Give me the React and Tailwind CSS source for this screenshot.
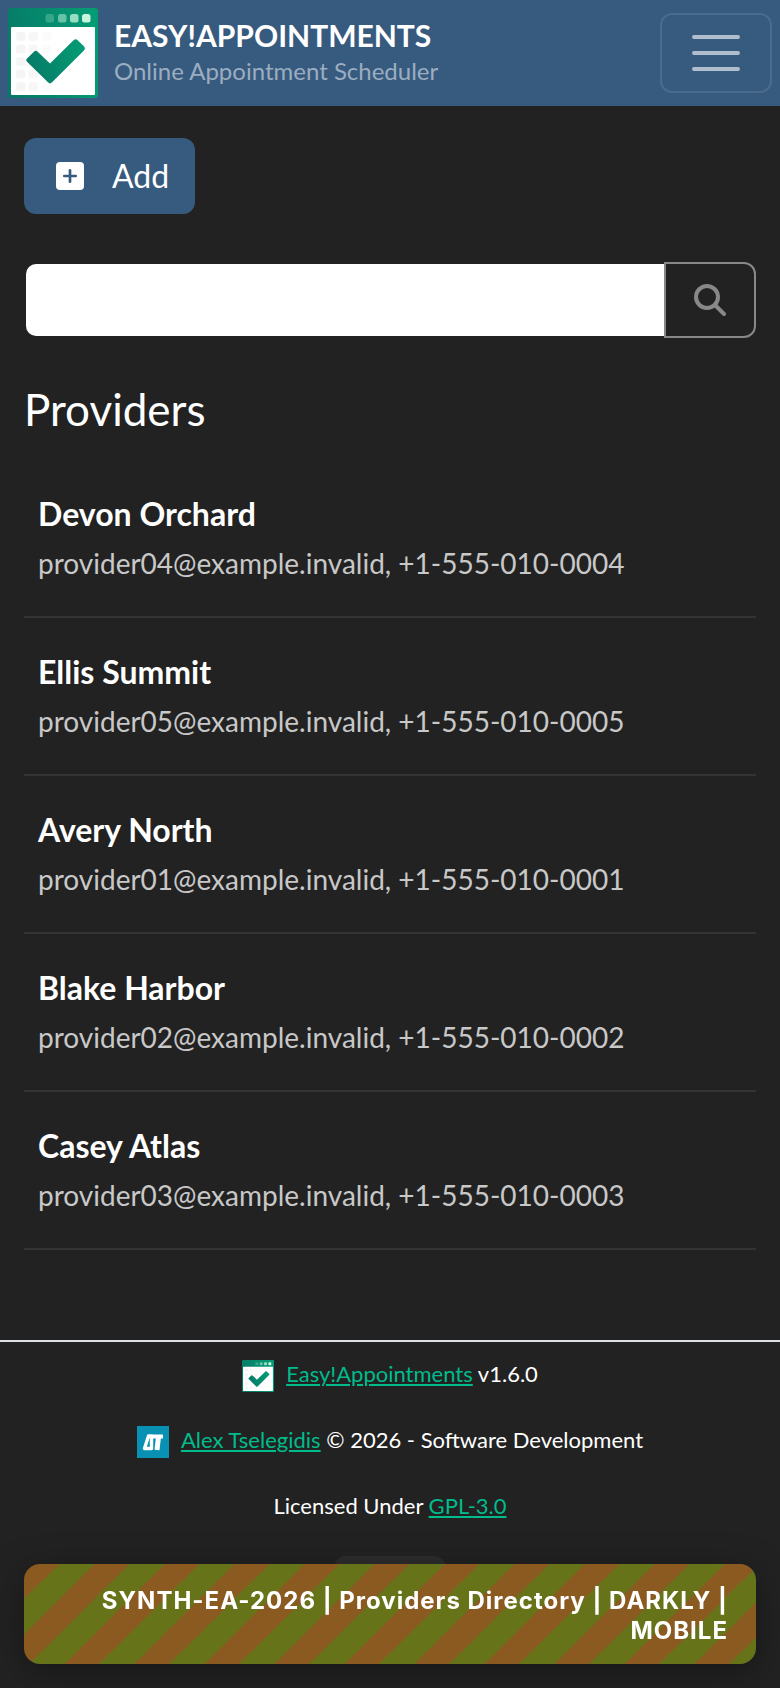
import { useState } from 'react'

const providers = [
  { name: 'Devon Orchard', email: 'provider04@example.invalid', phone: '+1-555-010-0004' },
  { name: 'Ellis Summit', email: 'provider05@example.invalid', phone: '+1-555-010-0005' },
  { name: 'Avery North', email: 'provider01@example.invalid', phone: '+1-555-010-0001' },
  { name: 'Blake Harbor', email: 'provider02@example.invalid', phone: '+1-555-010-0002' },
  { name: 'Casey Atlas', email: 'provider03@example.invalid', phone: '+1-555-010-0003' },
]

function LogoMark({ id, className }) {
  const columns = [
    { x: 8, opacity: 0.04 },
    { x: 20.5, opacity: 0.03 },
    { x: 34, opacity: 0.015 },
  ]

  return (
    <svg viewBox="0 0 90 90" className={className} aria-hidden="true">
      <defs>
        <linearGradient id={id} x1="0" y1="0.5" x2="1" y2="0.3">
          <stop offset="0" stopColor="#067a68" />
          <stop offset="1" stopColor="#059c74" />
        </linearGradient>
      </defs>
      <rect width="90" height="90" rx="3" fill={`url(#${id})`} />
      <rect x="3" y="19" width="84" height="68" rx="1" fill="#fff" />
      <g fill="#c8f5dd">
        <rect x="37.5" y="6" width="8.5" height="8.5" rx="2.5" opacity="0.25" />
        <rect x="50" y="6" width="8.5" height="8.5" rx="2.5" opacity="0.5" />
        <rect x="62" y="6" width="8.5" height="8.5" rx="2.5" opacity="0.75" />
        <rect x="74" y="6" width="8.5" height="8.5" rx="2.5" />
      </g>
      {columns.map((column) =>
        [24, 36.5, 49, 61.5, 74].map((y) => (
          <rect key={`${column.x}-${y}`} x={column.x} y={y} width="9.5" height="9" rx="2.5" opacity={column.opacity} />
        )),
      )}
      <path
        d="M18.8 50.8 L26.2 43.4 Q27.8 42 29.4 43.4 L42 55.6 L65.8 32 Q67.6 30.3 69.4 32 L76.2 38.6 Q77.8 40.4 76.2 42.2 L43.8 74.6 Q42 76.2 40.2 74.6 L18.8 53.6 Q17.4 52.2 18.8 50.8 Z"
        fill={`url(#${id})`}
      />
    </svg>
  )
}

function AuthorMark() {
  return (
    <svg viewBox="0 0 32 32" className="size-8 shrink-0" aria-hidden="true">
      <rect width="32" height="32" fill="#0891b2" />
      <g fill="none" stroke="#fff" strokeLinejoin="round">
        <path d="M7.5 22.5 L11.5 10 H14.5 V22.5 Z" strokeWidth="3.4" />
        <path d="M15 10.5 H26" strokeWidth="4" />
        <path d="M21.5 11 L20 24" strokeWidth="5" />
      </g>
    </svg>
  )
}

function Header() {
  return (
    <header className="flex items-center justify-between bg-[#375a7f] p-2">
      <a href="#calendar" className="flex items-center gap-4">
        <LogoMark id="header-logo" className="size-[90px] shrink-0" />
        <span className="flex flex-col">
          <span className="text-[30px] leading-9 font-bold text-white">EASY!APPOINTMENTS</span>
          <span className="text-2xl leading-9 text-[#9badc0]">Online Appointment Scheduler</span>
        </span>
      </a>
      <button
        type="button"
        aria-label="Toggle navigation"
        className="flex h-20 w-28 items-center justify-center rounded-xl border-2 border-white/10"
      >
        <svg viewBox="0 0 60 60" className="size-15" aria-hidden="true">
          <path d="M8 14 H52 M8 30 H52 M8 46 H52" stroke="#afbdcc" strokeWidth="4" strokeLinecap="round" />
        </svg>
      </button>
    </header>
  )
}

function ProviderRow({ provider }) {
  return (
    <li className="border-b-2 border-[#343434] px-3.5 pt-7 pb-[30px]">
      <a href="#provider" className="block">
        <strong className="block text-[32px] leading-[52px] font-bold text-white">{provider.name}</strong>
        <span className="block text-[28px] leading-[46px] text-[#c8c8c8]">
          {provider.email}, {provider.phone}
        </span>
      </a>
    </li>
  )
}

function Footer() {
  const row = 'flex h-[34px] gap-3'
  const link = 'text-[#00bc8c] underline'

  return (
    <footer className="flex flex-col items-center gap-8 border-t-2 border-[#dee2e6] pt-4 text-[22px] leading-8 text-white">
      <div className={row}>
        <span className="self-end">
          <LogoMark id="footer-logo" className="size-8 shrink-0" />
        </span>
        <span>
          <a href="#easyappointments" className={link}>Easy!Appointments</a> v1.6.0
        </span>
      </div>
      <div className={row}>
        <span className="self-end">
          <AuthorMark />
        </span>
        <span>
          <a href="#author" className={link}>Alex Tselegidis</a> © 2026 - Software Development
        </span>
      </div>
      <div className={row}>
        <span>
          Licensed Under <a href="#license" className={link}>GPL-3.0</a>
        </span>
      </div>
      <button type="button" aria-label="Select language" className="h-12 w-28 rounded-xl bg-[#2d2d2d]" />
    </footer>
  )
}

export default function App() {
  const [keyword, setKeyword] = useState('')

  return (
    <div className="min-h-screen bg-[#222222] font-['Lato',sans-serif]">
      <Header />

      <main className="px-6 pt-8 pb-[90px]">
        <button
          type="button"
          className="flex h-[76px] items-center gap-7 rounded-xl bg-[#375a7f] pr-[26px] pl-8 text-[32px] text-white"
        >
          <svg viewBox="0 0 28 28" className="size-7" aria-hidden="true">
            <rect width="28" height="28" rx="4" fill="#fff" />
            <path d="M14 8.3 V19.7 M8.3 14 H19.7" stroke="#375a7f" strokeWidth="2.7" strokeLinecap="round" />
          </svg>
          Add
        </button>

        <form className="mt-12 flex h-[76px]" onSubmit={(event) => event.preventDefault()}>
          <input
            type="text"
            aria-label="Search providers"
            value={keyword}
            onChange={(event) => setKeyword(event.target.value)}
            className="min-w-0 flex-1 rounded-l-xl border-2 border-r-0 border-[#222222] bg-white px-6 text-[30px] text-[#222222] outline-none"
          />
          <button
            type="submit"
            aria-label="Search"
            className="flex w-[92px] items-center justify-center rounded-r-xl border-2 border-[#888888]"
          >
            <svg viewBox="0 0 32 32" className="size-8" fill="none" stroke="#888888" aria-hidden="true">
              <circle cx="13" cy="13" r="11" strokeWidth="4" />
              <path d="M21 21 L30 30" strokeWidth="4" strokeLinecap="round" />
            </svg>
          </button>
        </form>

        <h4 className="mt-10 text-[44px] leading-[62px] text-white">Providers</h4>

        <ul className="mt-5">
          {providers.map((provider) => (
            <ProviderRow key={provider.email} provider={provider} />
          ))}
        </ul>
      </main>

      <Footer />

      <div className="fixed inset-x-6 bottom-6 rounded-2xl bg-[linear-gradient(135deg,#8b5a20_25%,#667318_25%,#667318_50%,#8b5a20_50%,#8b5a20_75%,#667318_75%)] bg-size-[70px_70px] px-7 pt-[22px] pb-[18px] text-right font-['Inter',sans-serif] text-2xl leading-[30px] font-bold tracking-[1px] text-white shadow-[0_8px_36px_rgba(0,0,0,0.35)]">
        SYNTH-EA-2026 | Providers Directory | DARKLY | MOBILE
      </div>
    </div>
  )
}
